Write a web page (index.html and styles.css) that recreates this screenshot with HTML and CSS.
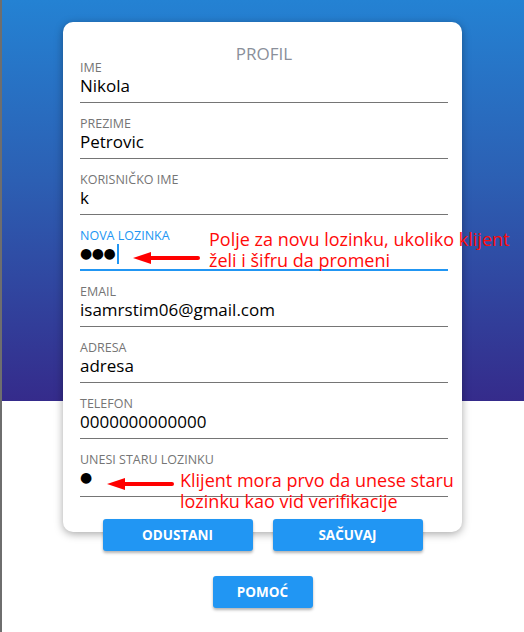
FILE: index.html
```html
<!DOCTYPE html>
<html lang="sr">
<head>
<meta charset="utf-8">
<title>Profil</title>
<link rel="stylesheet" href="styles.css">
</head>
<body>
<div class="page">
  <div class="card">
    <h1 class="title">PROFIL</h1>
    <div class="field"><div class="label">IME</div><div class="value">Nikola</div></div>
    <div class="field"><div class="label">PREZIME</div><div class="value">Petrovic</div></div>
    <div class="field"><div class="label">KORISNIČKO IME</div><div class="value">k</div></div>
    <div class="field focused"><div class="label">NOVA LOZINKA</div><div class="value dots">●●●<span class="caret"></span></div></div>
    <div class="field"><div class="label">EMAIL</div><div class="value">isamrstim06@gmail.com</div></div>
    <div class="field"><div class="label">ADRESA</div><div class="value">adresa</div></div>
    <div class="field"><div class="label">TELEFON</div><div class="value">0000000000000</div></div>
    <div class="field field-last"><div class="label">UNESI STARU LOZINKU</div><div class="value dots">●</div></div>

    <div class="note note-new">
      <svg class="arrow" width="70" height="16" viewBox="0 0 70 16"><path d="M16 8 H66" stroke="#ff0000" stroke-width="4" stroke-linecap="round"/><path d="M1 8 L19 2 L19 14 Z" fill="#ff0000"/></svg>
      <p class="note-text">Polje za novu lozinku, ukoliko klijent<br>želi i šifru da promeni</p>
    </div>
    <div class="note note-old">
      <svg class="arrow" width="70" height="16" viewBox="0 0 70 16"><path d="M16 8 H66" stroke="#ff0000" stroke-width="4" stroke-linecap="round"/><path d="M1 8 L19 2 L19 14 Z" fill="#ff0000"/></svg>
      <p class="note-text">Klijent mora prvo da unese staru<br>lozinku kao vid verifikacije</p>
    </div>
  </div>
  <div class="actions">
    <button class="btn btn-wide">ODUSTANI</button>
    <button class="btn btn-wide">SAČUVAJ</button>
  </div>
  <div class="help">
    <button class="btn btn-small">POMOĆ</button>
  </div>
</div>
</body>
</html>
```

FILE: styles.css
```css
html, body {
  margin: 0;
  padding: 0;
  height: 100%;
}
body {
  font-family: "Open Sans", "Noto Sans", sans-serif;
  background: #fff linear-gradient(180deg, #2482d3 0%, #2c5fb3 45%, #352b8b 100%) no-repeat 0 0 / 100% 401px;
  border-left: 2px solid #6e6e6e;
  box-sizing: border-box;
  min-height: 632px;
}
.page {
  padding-top: 22px;
}
.card {
  position: relative;
  box-sizing: border-box;
  width: 399px;
  margin-left: 61px;
  background: #fff;
  border-radius: 10px;
  box-shadow: 0 2px 8px rgba(0,0,0,0.35);
  padding: 24px 14px 35px 17px;
}
.title {
  margin: 0;
  font-size: 17px;
  font-weight: 400;
  line-height: 16px;
  color: #8a8f9a;
  text-align: center;
}
.field {
  border-bottom: 1px solid #757575;
  padding-bottom: 5px;
  margin-bottom: 15px;
}
.field-last { margin-bottom: 0; padding-bottom: 7px; }
.label {
  font-size: 12.5px;
  line-height: 12px;
  color: #757575;
}
.value {
  font-size: 17px;
  line-height: 23px;
  color: #000;
}
.dots {
  font-family: "DejaVu Sans", sans-serif;
  font-size: 14px;
  letter-spacing: -0.5px;
  display: flex;
  align-items: center;
}
.caret {
  display: inline-block;
  width: 1.5px;
  height: 20px;
  background: #2196f3;
  margin-left: 2px;
}
.focused {
  border-bottom: 2px solid #2196f3;
  padding-bottom: 4px;
}
.focused .label { color: #2196f3; }

.note {
  position: absolute;
  display: flex;
  align-items: flex-start;
  gap: 7px;
  white-space: nowrap;
}
.note-new { left: 69px; top: 207px; }
.note-old { left: 43px; top: 448px; gap: 4px; }
.note-new .arrow { margin-top: 21px; flex: none; }
.note-old .arrow { margin-top: 6px; flex: none; }
.note-text {
  margin: 0;
  font-size: 18px;
  line-height: 21px;
  color: #ff0a0a;
}

.actions {
  display: flex;
  justify-content: center;
  gap: 20px;
  margin-top: -13px;
  width: 399px;
  margin-left: 61px;
  position: relative;
}
.help {
  display: flex;
  justify-content: center;
  width: 399px;
  margin-left: 61px;
  margin-top: 25px;
}
.btn {
  height: 32px;
  border: 0;
  border-radius: 3px;
  background: #2196f3;
  color: #fff;
  font-family: "Open Sans", "Noto Sans", sans-serif;
  font-weight: 700;
  font-size: 13.5px;
  box-shadow: 0 2px 3px rgba(0,0,0,0.3);
  padding: 0;
}
.btn-wide { width: 150px; }
.btn-small { width: 100px; }
```
